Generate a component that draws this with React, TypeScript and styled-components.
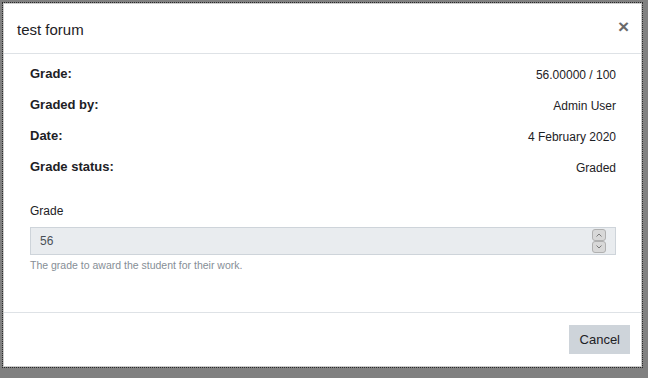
import React from "react";
import styled, { createGlobalStyle } from "styled-components";

const GlobalStyle = createGlobalStyle`
  html, body {
    margin: 0;
    padding: 0;
    background: #808080;
  }
  body {
    font-family: "Liberation Sans", Arial, sans-serif;
    color: #1d2125;
  }
`;

const Backdrop = styled.div`
  width: 648px;
  height: 378px;
  padding: 3px;
  box-sizing: border-box;
  background: #808080;
`;

const Modal = styled.div`
  width: 639px;
  height: 364px;
  box-sizing: border-box;
  background: #fff;
  border: 1px solid rgba(0, 0, 0, 0.2);
  outline: 1px dotted #2b2b2b;
  display: flex;
  flex-direction: column;
`;

const Header = styled.div`
  height: 49px;
  display: flex;
  align-items: center;
  justify-content: space-between;
  padding: 0 12px 0 13px;
  border-bottom: 1px solid #dee2e6;
  box-sizing: content-box;
`;

const Title = styled.h5`
  margin: 0;
  font-size: 15px;
  font-weight: 400;
  color: #1d2125;
  padding-top: 1px;
`;

const Close = styled.button`
  border: 0;
  background: none;
  padding: 0;
  font-family: "Liberation Sans", Arial, sans-serif;
  font-size: 19px;
  font-weight: 700;
  line-height: 1;
  color: #6a6a6a;
  cursor: pointer;
  margin-bottom: 5px;
`;

const Body = styled.div`
  flex: 1;
  padding: 4px 25px 0 26px;
  border-bottom: 1px solid #dee2e6;
`;

const Row = styled.div`
  height: 31px;
  display: flex;
  align-items: center;
  justify-content: space-between;
`;

const Label = styled.span`
  font-size: 13px;
  font-weight: 700;
  color: #1d2125;
`;

const Value = styled.span`
  font-size: 12px;
  color: #1d2125;
  padding-top: 2px;
`;

const FieldLabel = styled.div`
  margin-top: 20px;
  font-size: 12px;
  line-height: 18px;
  color: #1d2125;
`;

const InputBox = styled.div`
  margin-top: 7px;
  height: 28px;
  box-sizing: border-box;
  background: #e9ecef;
  border: 1px solid #ced4da;
  display: flex;
  align-items: center;
  justify-content: space-between;
  padding: 0 9px 0 9px;
  font-size: 12px;
  color: #495057;
`;

const Spinner = styled.div`
  display: flex;
  flex-direction: column;
`;

const SpinBtn = styled.div`
  width: 14px;
  height: 12px;
  box-sizing: border-box;
  border: 1px solid #b0b0b0;
  border-radius: 3px;
  background: #d8d8d8;
  display: flex;
  align-items: center;
  justify-content: center;
`;

const Help = styled.div`
  margin-top: 3px;
  font-size: 10.5px;
  line-height: 14px;
  color: #868e96;
`;

const Footer = styled.div`
  height: 53px;
  display: flex;
  align-items: center;
  justify-content: flex-end;
  padding-right: 11px;
`;

const Button = styled.button`
  height: 29px;
  padding: 0 10px 0 11px;
  border: 0;
  background: #ced4da;
  color: #1d2125;
  font-family: "Liberation Sans", Arial, sans-serif;
  font-size: 13px;
  cursor: pointer;
`;

const rows = [
  ["Grade:", "56.00000 / 100"],
  ["Graded by:", "Admin User"],
  ["Date:", "4 February 2020"],
  ["Grade status:", "Graded"],
];

const Chevron = ({ up }: { up?: boolean }) => (
  <svg width="6" height="4" viewBox="0 0 6 4">
    <path
      d={up ? "M0.5 3.5 L3 1 L5.5 3.5" : "M0.5 0.5 L3 3 L5.5 0.5"}
      fill="none"
      stroke="#7a7a7a"
      strokeWidth="1"
    />
  </svg>
);

export default function App() {
  return (
    <>
      <GlobalStyle />
      <Backdrop>
        <Modal>
          <Header>
            <Title>test forum</Title>
            <Close aria-label="Close">×</Close>
          </Header>
          <Body>
            {rows.map(([label, value]) => (
              <Row key={label}>
                <Label>{label}</Label>
                <Value>{value}</Value>
              </Row>
            ))}
            <FieldLabel>Grade</FieldLabel>
            <InputBox>
              <span>56</span>
              <Spinner>
                <SpinBtn>
                  <Chevron up />
                </SpinBtn>
                <SpinBtn>
                  <Chevron />
                </SpinBtn>
              </Spinner>
            </InputBox>
            <Help>The grade to award the student for their work.</Help>
          </Body>
          <Footer>
            <Button>Cancel</Button>
          </Footer>
        </Modal>
      </Backdrop>
    </>
  );
}
